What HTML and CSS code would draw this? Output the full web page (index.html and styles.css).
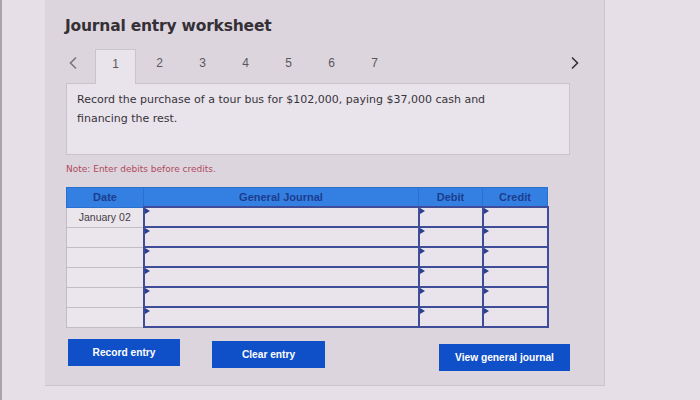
FILE: index.html
```html
<!DOCTYPE html>
<html>
<head>
<meta charset="utf-8">
<link rel="stylesheet" href="styles.css">
</head>
<body>
<div class="screen">
  <div class="panel">
    <h1 class="title">Journal entry worksheet</h1>
    <div class="tabs">
      <span class="nav prev"><svg width="10" height="14" viewBox="0 0 10 14"><path d="M8 1.5 L2.5 7 L8 12.5" fill="none" stroke="#777" stroke-width="1.6"/></svg></span>
      <span class="tab active">1</span>
      <span class="tab">2</span>
      <span class="tab">3</span>
      <span class="tab">4</span>
      <span class="tab">5</span>
      <span class="tab">6</span>
      <span class="tab">7</span>
      <span class="nav next"><svg width="10" height="14" viewBox="0 0 10 14"><path d="M2 1.5 L7.5 7 L2 12.5" fill="none" stroke="#333" stroke-width="1.6"/></svg></span>
    </div>
    <div class="question">
      <p>Record the purchase of a tour bus for $102,000, paying $37,000 cash and financing the rest.</p>
    </div>
    <p class="note">Note: Enter debits before credits.</p>
    <table class="journal">
      <thead>
        <tr><th class="c-date">Date</th><th class="c-gj">General Journal</th><th class="c-dr">Debit</th><th class="c-cr">Credit</th></tr>
      </thead>
      <tbody>
        <tr><td class="date">January 02</td><td class="in"></td><td class="in"></td><td class="in"></td></tr>
        <tr><td class="date"></td><td class="in"></td><td class="in"></td><td class="in"></td></tr>
        <tr><td class="date"></td><td class="in"></td><td class="in"></td><td class="in"></td></tr>
        <tr><td class="date"></td><td class="in"></td><td class="in"></td><td class="in"></td></tr>
        <tr><td class="date"></td><td class="in"></td><td class="in"></td><td class="in"></td></tr>
        <tr><td class="date"></td><td class="in"></td><td class="in"></td><td class="in"></td></tr>
      </tbody>
    </table>
    <div class="actions">
      <button class="btn record">Record entry</button>
      <button class="btn clear">Clear entry</button>
      <button class="btn view">View general journal</button>
    </div>
  </div>
</div>
</body>
</html>
```
FILE: styles.css
```css
html, body {
  margin: 0;
  padding: 0;
}
body {
  background: #e6dfe8;
  font-family: "DejaVu Sans", Verdana, sans-serif;
  width: 700px;
  height: 400px;
  overflow: hidden;
}
.screen {
  height: 400px;
  border-left: 2px solid #a9a4ab;
  display: flex;
  align-items: flex-start;
}
.panel {
  margin-left: 43px;
  width: 560px;
  height: 386px;
  box-sizing: border-box;
  background: #dcd5de;
  border-right: 1px solid #cbc5cd;
  border-bottom: 1px solid #cbc5cd;
  padding: 15px 0 0 20px;
}
.title {
  margin: 0;
  font-size: 15.5px;
  font-weight: bold;
  line-height: 22px;
  color: #343036;
  letter-spacing: -0.2px;
}
.tabs {
  margin-top: 12px;
  margin-left: 1px;
  width: 520px;
  height: 34px;
  display: flex;
  align-items: stretch;
  position: relative;
  z-index: 1;
}
.nav {
  display: flex;
  align-items: center;
  padding-bottom: 7px;
}
.prev {
  width: 29px;
  padding-left: 2px;
  box-sizing: border-box;
}
.next {
  margin-left: auto;
  margin-right: 6px;
}
.tab {
  width: 43px;
  display: flex;
  justify-content: center;
  padding-top: 7px;
  box-sizing: border-box;
  font-family: "Liberation Sans", Arial, sans-serif;
  font-size: 12px;
  color: #5a565c;
}
.tab.active {
  width: 41px;
  margin-right: 2px;
  background: #e9e3eb;
  border: 1px solid #c9c3cc;
  border-bottom: none;
  margin-bottom: -1px;
}
.question {
  margin-left: 1px;
  width: 504px;
  height: 72px;
  box-sizing: border-box;
  background: #e9e3eb;
  border: 1px solid #c9c3cc;
  padding: 6px 10px;
}
.question p {
  margin: 0;
  max-width: 420px;
  font-size: 11px;
  line-height: 19px;
  color: #38343a;
}
.note {
  margin: 8px 0 0 1px;
  font-size: 9px;
  line-height: 12px;
  color: #b04a5c;
}
.journal {
  margin: 12px 0 0 1px;
  border-collapse: collapse;
  width: 477px;
  table-layout: fixed;
  font-family: "Liberation Sans", Arial, sans-serif;
}
.journal th {
  height: 18px;
  padding: 0;
  background: #3480e2;
  color: #1c3d8d;
  font-size: 11px;
  font-weight: bold;
  border: 1px solid #2b6fcf;
}
.c-date { width: 76px; }
.c-gj { width: 274px; }
.c-dr { width: 63px; }
.c-cr { width: 64px; }
.journal td {
  height: 18px;
  padding: 0;
}
.journal td.date {
  background: #ebe5ec;
  border: 1px solid #c2bcc5;
  color: #444046;
  font-size: 10.5px;
  text-align: center;
}
.journal td.in {
  background: #e9e3eb;
  border: 2px solid #3f4d98;
  position: relative;
}
.journal td.in::before {
  content: "";
  position: absolute;
  top: 0;
  left: 0;
  border-left: 5px solid #2b3f90;
  border-top: 3px solid transparent;
  border-bottom: 3px solid transparent;
}
.actions {
  display: flex;
  align-items: flex-start;
  margin-top: 11px;
  margin-left: 3px;
}
.btn {
  height: 27px;
  border: none;
  background: #0f50c8;
  color: #fff;
  font-family: "Liberation Sans", Arial, sans-serif;
  font-size: 10.2px;
  font-weight: bold;
  padding: 0;
}
.record {
  width: 112px;
}
.clear {
  width: 113px;
  margin-left: 32px;
  margin-top: 2px;
}
.view {
  width: 131px;
  margin-left: 114px;
  margin-top: 5px;
}
```
